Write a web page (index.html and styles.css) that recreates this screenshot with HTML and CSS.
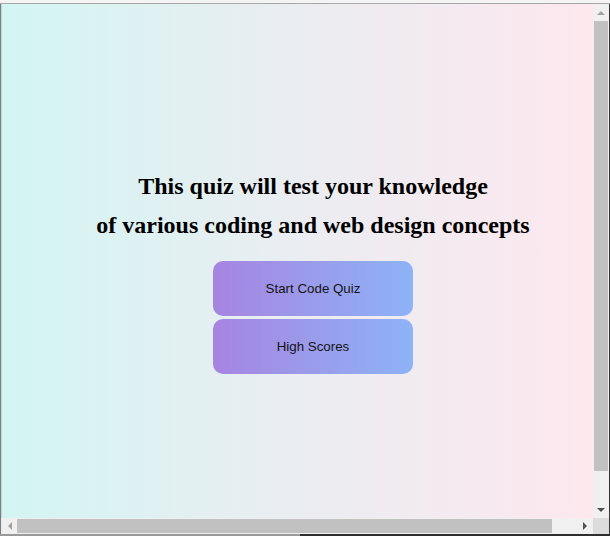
FILE: index.html
```html
<!DOCTYPE html>
<html>
<head>
<meta charset="utf-8">
<link rel="stylesheet" href="styles.css">
<title>Code Quiz</title>
</head>
<body>
<div class="screen">
  <div class="topstrip"></div>
  <div class="window">
    <div class="edge-left"></div>
    <div class="viewport">
      <div class="page">
        <h1 class="title">This quiz will test your knowledge<br>of various coding and web design concepts</h1>
        <div class="actions">
          <button class="btn">Start Code Quiz</button>
          <button class="btn">High Scores</button>
        </div>
      </div>
    </div>
    <div class="vscroll">
      <div class="arrow-box"><span class="tri tri-up"></span></div>
      <div class="vtrack"><div class="vthumb"></div></div>
      <div class="arrow-box"><span class="tri tri-down"></span></div>
    </div>
    <div class="edge-right"></div>
    <div class="edge-left2"></div>
    <div class="hscroll">
      <div class="arrow-box h"><span class="tri tri-left"></span></div>
      <div class="htrack"><div class="hthumb"></div></div>
      <div class="arrow-box h"><span class="tri tri-right"></span></div>
    </div>
    <div class="corner"></div>
    <div class="edge-right"></div>
  </div>
  <div class="bottomstrip"><div class="bs-light"></div><div class="bs-dark"></div></div>
</div>
</body>
</html>
```
FILE: styles.css
```css
html, body {
  margin: 0;
  padding: 0;
  background: #2e2e2e;
}
.screen {
  width: 610px;
  height: 536px;
  display: grid;
  grid-template-rows: 3px 531px 2px;
  overflow: hidden;
}
.topstrip {
  background: #f4f4f4;
}
.window {
  border-top: 1px solid #a7a7a7;
  display: grid;
  grid-template-columns: 2px 591px 16px 1px;
  grid-template-rows: 514px 16px;
}
.edge-left {
  background: linear-gradient(to right, #7a7f85 0 1px, #c9d3d6 1px 2px);
}
.edge-left2 {
  background: linear-gradient(to right, #7a7f85 0 1px, #e8e8e8 1px 2px);
}
.edge-right {
  background: #3a3a3a;
}
.viewport {
  overflow: hidden;
  background: linear-gradient(to right, #d2f5f4 0%, #e4eff1 35%, #eeecf1 60%, #fde8ee 100%);
}
.page {
  width: 622px;
  height: 546px;
  padding-top: 163px;
  box-sizing: border-box;
  display: flex;
  flex-direction: column;
  align-items: center;
}
.title {
  margin: 0;
  font-family: "Liberation Serif", "Times New Roman", serif;
  font-weight: bold;
  font-size: 24px;
  line-height: 39px;
  text-align: center;
  color: #000;
}
.actions {
  margin-top: 16px;
  display: flex;
  flex-direction: column;
  gap: 3px;
}
.btn {
  width: 200px;
  height: 55px;
  border: none;
  border-radius: 10px;
  background: linear-gradient(to right, #a784e1, #8db3f6);
  font-family: "Liberation Sans", Arial, sans-serif;
  font-size: 13.333px;
  color: #141414;
  padding: 0;
}
.vscroll {
  background: #f0f0f0;
  display: grid;
  grid-template-rows: 17px 1fr 17px;
}
.vtrack {
  padding: 0 1px;
  display: flex;
  flex-direction: column;
}
.vthumb {
  height: 450px;
  background: #c1c1c1;
}
.hscroll {
  background: #f0f0f0;
  display: grid;
  grid-template-columns: 15px 1fr 17px;
}
.htrack {
  padding: 1px 0;
  display: flex;
}
.hthumb {
  width: 535px;
  background: #c1c1c1;
}
.arrow-box {
  display: flex;
  align-items: center;
  justify-content: center;
}
.tri {
  width: 0;
  height: 0;
  display: block;
}
.tri-up {
  border-left: 4px solid transparent;
  border-right: 4px solid transparent;
  border-bottom: 4px solid #a3a3a3;
}
.tri-down {
  border-left: 4px solid transparent;
  border-right: 4px solid transparent;
  border-top: 4px solid #505050;
}
.tri-left {
  border-top: 4px solid transparent;
  border-bottom: 4px solid transparent;
  border-right: 4px solid #a3a3a3;
}
.tri-right {
  border-top: 4px solid transparent;
  border-bottom: 4px solid transparent;
  border-left: 4px solid #505050;
}
.corner {
  background: #dcdcdc;
}
.bottomstrip {
  display: flex;
}
.bs-light {
  width: 300px;
  background: #9a9a9a;
}
.bs-dark {
  flex: 1;
  background: #2e2e2e;
}
```
